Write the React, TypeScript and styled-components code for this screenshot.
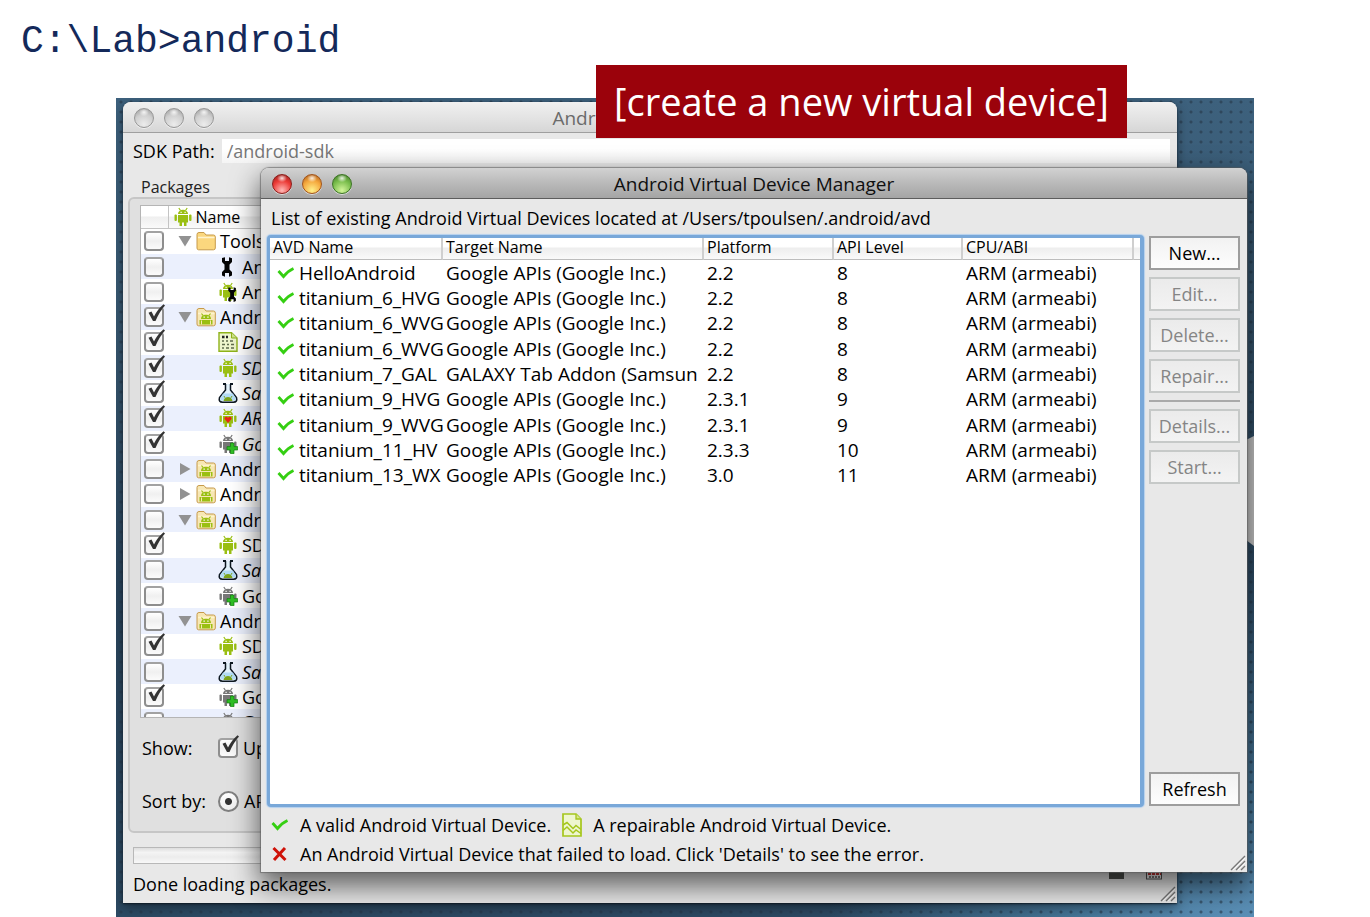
import React from "react";
import styled, { createGlobalStyle, css } from "styled-components";

const GlobalStyle = createGlobalStyle`
  *, *::before, *::after { box-sizing: border-box; }
  body { margin: 0; background: #fff; }
`;

const uiFont = `"Open Sans", "Noto Sans", sans-serif`;

const Page = styled.main`
  position: relative;
  display: flex;
  flex-direction: column;
  min-height: 100vh;
  overflow: hidden;
  font-family: ${uiFont};
  font-size: 18px;
  line-height: 24px;
  color: #000;
`;

const Command = styled.h1`
  margin: 0;
  height: 98px;
  padding: 20px 21px;
  font-family: "Liberation Mono", monospace;
  font-size: 38px;
  font-weight: 400;
  line-height: 44px;
  color: #14295a;
`;

const Banner = styled.div`
  position: absolute;
  top: 65px;
  left: 596px;
  right: 243px;
  z-index: 3;
  height: 73px;
  background: #9b020b;
  color: #fff;
  font-size: 38px;
  line-height: 73px;
  text-align: center;
  white-space: nowrap;
`;

const Desktop = styled.section`
  position: relative;
  flex: 1;
  min-height: 819px;
  margin: 0 116px;
  overflow: hidden;
  background:
    radial-gradient(circle at 5px 4px, rgba(38, 55, 72, 0.6) 1px, transparent 2px) 0 0 / 10px 10px,
    radial-gradient(circle at 100% 104%, #5f95bd 0, #477799 12%, transparent 30%),
    linear-gradient(180deg, #3d617d 0, #36566f 30%, #29445c 60%, #2c4a63 100%);
`;

const WallpaperShape = styled.svg`
  position: absolute;
  top: 338px;
  right: 0;
`;

const Window = styled.div<{ $front?: boolean }>`
  position: absolute;
  display: flex;
  flex-direction: column;
  border-radius: 8px 8px 0 0;
  background: #e8e8e8;
  overflow: hidden;
  ${(p) =>
    p.$front
      ? css`
          z-index: 2;
          top: 70px;
          left: 145px;
          right: 7px;
          min-height: 704px;
          box-shadow: 0 0 1px 1px rgba(90, 90, 90, 0.6), 0 12px 28px 2px rgba(0, 0, 0, 0.6);
        `
      : css`
          z-index: 1;
          top: 4px;
          left: 7px;
          right: 77px;
          min-height: 801px;
          box-shadow: 0 1px 2px rgba(10, 20, 30, 0.8), 0 4px 12px rgba(0, 0, 0, 0.4);
        `}
`;

const TitleBar = styled.header<{ $front?: boolean }>`
  display: grid;
  grid-template-columns: 1fr auto 1fr;
  align-items: center;
  height: 31px;
  padding: 0 11px;
  border-bottom: 1px solid ${(p) => (p.$front ? "#5c5c5c" : "#9f9f9f")};
  background: ${(p) =>
    p.$front
      ? "linear-gradient(#d2d2d2, #bcbcbc 45%, #a4a4a4)"
      : "linear-gradient(#f0f0f0, #e4e4e4 50%, #d6d6d6)"};
`;

const WindowTitle = styled.h2<{ $front?: boolean }>`
  margin: 0;
  font-size: 19px;
  font-weight: 400;
  line-height: 32px;
  color: ${(p) => (p.$front ? "#101010" : "#6b6b6b")};
  white-space: nowrap;
`;

const Lights = styled.div`
  display: flex;
  gap: 10px;
`;

const Light = styled.button<{ $edge: string; $mid: string; $glow: string }>`
  width: 20px;
  height: 20px;
  padding: 0;
  border: 1px solid ${(p) => p.$edge};
  border-radius: 50%;
  background:
    radial-gradient(ellipse 5px 4px at 50% 18%, rgba(255, 255, 255, 0.85), transparent),
    radial-gradient(circle at 50% 85%, ${(p) => p.$glow} 0, ${(p) => p.$mid} 55%, ${(p) => p.$edge} 100%);
  box-shadow: 0 1px 0 rgba(255, 255, 255, 0.6);
`;

const PathRow = styled.label`
  display: flex;
  align-items: center;
  gap: 7px;
  padding: 6px 7px 0 10px;
  white-space: nowrap;
`;

const PathInput = styled.input`
  flex: 1;
  min-width: 0;
  height: 24px;
  padding: 0 5px;
  border: 0;
  background: linear-gradient(#fff 40%, #f4f4f4);
  font: inherit;
  color: #777;
`;

const GroupLabel = styled.h3`
  margin: 14px 18px 0;
  font-size: 16px;
  font-weight: 400;
  line-height: 20px;
  color: #222;
`;

const Group = styled.div`
  display: flex;
  flex-direction: column;
  margin: 0 5px;
  padding: 6px 10px 18px;
  border: 2px solid #c6c6c6;
  border-radius: 6px;
  background: #e0e0e0;
`;

const TreeFrame = styled.div`
  height: 513px;
  overflow: hidden;
  border: 1px solid #b5b5b5;
  background: #fff;
`;

const Tree = styled.table`
  width: 100%;
  height: 529px;
  table-layout: fixed;
  border-collapse: collapse;
  td, th { padding: 0; }
  thead th {
    height: 22px;
    border-right: 1px solid #c4c4c4;
    border-bottom: 1px solid #c4c4c4;
    background: linear-gradient(#fff 45%, #efefef 50%, #fafafa);
    font-size: 16px;
    font-weight: 400;
    line-height: 20px;
    text-align: left;
  }
  tbody tr:nth-child(even) { background: #ebf0fd; }
`;

const TickCol = styled.col`
  width: 27px;
`;

const TreeCell = styled.div<{ $level?: number; $italic?: boolean }>`
  display: flex;
  align-items: center;
  gap: 4px;
  height: 24px;
  padding-left: ${(p) => (p.$level ? 50 : 10)}px;
  font-style: ${(p) => (p.$italic ? "italic" : "normal")};
  white-space: nowrap;
`;

const TreeHead = styled.div`
  display: flex;
  align-items: center;
  gap: 3px;
  padding-left: 4px;
`;

const Tick = styled.span`
  position: relative;
  display: block;
  flex: none;
  width: 20px;
  height: 20px;
  margin: 0 3px;
  svg {
    position: absolute;
    left: 2px;
    top: -3px;
    display: none;
    pointer-events: none;
  }
  input:checked + svg { display: block; }
`;

const TickBox = styled.input`
  appearance: none;
  display: block;
  width: 20px;
  height: 20px;
  margin: 0;
  border: 2px solid #8e8e8e;
  border-top-color: #a2a2a2;
  border-radius: 4px;
  background: linear-gradient(#fff, #f0f0f0 50%, #fbfbfb);
`;

const OptionRow = styled.div`
  display: flex;
  align-items: center;
  margin-top: 18px;
  & + & { margin-top: 29px; }
`;

const OptionName = styled.span`
  width: 75px;
  padding-left: 2px;
  white-space: nowrap;
`;

const OptionLabel = styled.label`
  display: flex;
  align-items: center;
  gap: 2px;
`;

const Radio = styled.input`
  appearance: none;
  flex: none;
  width: 21px;
  height: 21px;
  margin: 0 3px;
  border: 2px solid #808080;
  border-radius: 50%;
  background: radial-gradient(circle, #333 3px, transparent 4px), linear-gradient(#fff, #eee);
`;

const Progress = styled.div`
  height: 17px;
  margin: 14px 60px 0 10px;
  border: 1px solid #b8b8b8;
  background: linear-gradient(#dedede, #f4f4f4 30%, #ececec 60%, #f8f8f8);
`;

const Status = styled.footer`
  display: flex;
  padding: 8px 10px 5px;
`;

const StatusIcons = styled.svg`
  position: absolute;
  right: 13px;
  bottom: 23px;
`;

const Grip = styled.svg`
  position: absolute;
  right: 1px;
  bottom: 1px;
`;

const Intro = styled.p`
  margin: 0;
  padding: 7px 10px 5px;
  white-space: nowrap;
`;

const Body = styled.div`
  display: flex;
  flex: 1;
  gap: 5px;
  padding: 0 7px 0 6px;
`;

const ListFrame = styled.div`
  flex: 1;
  min-width: 0;
  border: 3px solid #79a8d9;
  border-right-width: 4px;
  border-radius: 4px;
  background: #fff;
  box-shadow: 0 0 1px 1px #b4d0ee;
`;

const Devices = styled.table`
  width: 100%;
  table-layout: fixed;
  border-spacing: 0;
  th {
    height: 22px;
    padding: 0 3px 2px;
    border-right: 2px solid #cfcfcf;
    border-bottom: 1px solid #bdbdbd;
    background: linear-gradient(#fff 40%, #eee 50%, #fafafa);
    font-size: 16px;
    font-weight: 400;
    line-height: 19px;
    text-align: left;
    white-space: nowrap;
  }
  th:last-child { border-right: 0; }
  td {
    padding: 0 0 0 3px;
    overflow: hidden;
    font-size: 19px;
    white-space: nowrap;
  }
`;

const DeviceRows = styled.tbody`
  height: 228px;
`;

const Col = styled.col<{ $w?: number }>`
  width: ${(p) => (p.$w ? `${p.$w}px` : "auto")};
`;

const NameCell = styled.span`
  display: flex;
  align-items: center;
  gap: 4px;
  padding-left: 4px;
  overflow: hidden;
  svg { flex: none; }
`;

const Actions = styled.div`
  display: flex;
  flex-direction: column;
  gap: 7px;
  width: 91px;
  padding: 1px 0;
`;

const Action = styled.button`
  height: 34px;
  padding: 0;
  border: 2px solid #9d9d9d;
  background: linear-gradient(#f2f2f2, #fdfdfd);
  font: inherit;
  font-size: 18px;
  color: #000;
  &:disabled {
    border-color: #c6c9c8;
    background: linear-gradient(#ebebeb, #f3f3f3);
    color: #858585;
  }
  &:last-child { margin-top: auto; }
`;

const Separator = styled.hr`
  width: 100%;
  height: 2px;
  margin: 0;
  border: 0;
  background: #a9a9a9;
`;

const Legend = styled.footer`
  display: flex;
  flex-direction: column;
  gap: 5px;
  padding: 6px 10px;
`;

const LegendRow = styled.div`
  display: flex;
  align-items: center;
  gap: 11px;
  white-space: nowrap;
`;

const CheckGreen = () => (
  <svg width="18" height="14" viewBox="0 0 18 14" aria-hidden="true">
    <path d="M1.500 5 6.500 10.500C9 7.500 12 4.500 16.500 2.500" fill="none" stroke="#35cf12" strokeWidth="2.800" />
  </svg>
);

const CrossRed = () => (
  <svg width="18" height="16" viewBox="0 0 18 16" aria-hidden="true">
    <path d="M2.500 2 14.500 14M14 2 3 14" fill="none" stroke="#cf1208" strokeWidth="3" />
  </svg>
);

const DocWave = () => (
  <svg width="20" height="24" viewBox="0 0 20 24" aria-hidden="true">
    <path d="M1 1h13l5 5v17H1z" fill="#eef6cf" stroke="#a5c61c" strokeWidth="1.700" />
    <path d="M14 1v5h5" fill="#d5e68c" stroke="#a5c61c" strokeWidth="1.300" />
    <path d="M1 12 5 9.500 11 15.500 14 12.500 19 16.500" fill="none" stroke="#a5c61c" strokeWidth="1.500" />
    <path d="M1 17.500 5 14 11 20 14 17 19 20.500" fill="none" stroke="#a5c61c" strokeWidth="1.500" />
  </svg>
);

const TickMark = () => (
  <svg width="20" height="20" viewBox="0 0 20 20" aria-hidden="true">
    <path d="M2.500 8.800 5.500 7.500 8 12.500C10.500 8 13.500 3.500 17.500.300L19 1.500C15 6 12 11 9.500 17H7Z" fill="#333" />
  </svg>
);

const RobotShape = ({ color = "#9abf12" }: { color?: string }) => (
  <g fill={color}>
    <path d="M5 7C5 4.500 7 2.800 10 2.800S15 4.500 15 7Z" />
    <path d="M7.500 3.500 5.800 1M12.500 3.500 14.200 1" stroke={color} strokeWidth="1.200" />
    <rect x="5" y="8" width="10" height="7.500" />
    <rect x="1.500" y="7.500" width="2.400" height="6.500" rx="1" />
    <rect x="16.100" y="7.500" width="2.400" height="6.500" rx="1" />
    <rect x="6.500" y="15" width="2.500" height="4" />
    <rect x="11" y="15" width="2.500" height="4" />
    <path d="M7.500 4.800h1.200v1.200H7.500zM11.500 4.800h1.200v1.200h-1.200z" fill="#fff" />
  </g>
);

const WrenchShape = ({ x = 0, y = 0, s = 1 }: { x?: number; y?: number; s?: number }) => (
  <path
    transform={`translate(${x} ${y}) scale(${s})`}
    d="M3 1 6 .2V4H10V.2L13 1.200V5L10.500 7.500V12.500L13 15V18.500L10 19.800V16H6V19.800L3 18.500V15L5.500 12.500V7.500L3 5Z"
    fill="#050505"
  />
);

type Kind = "folder" | "tools" | "platformTools" | "platform" | "doc" | "robot" | "flask" | "heart" | "addon";

const Glyph = ({ kind }: { kind: Kind }) => (
  <svg width="20" height="20" viewBox="0 0 20 20" aria-hidden="true">
    {(kind === "folder" || kind === "platform") && (
      <>
        <path
          d="M1 3.500Q1 1.500 3 1.500H8L10 4H17.500Q19.300 4 19.300 6V17Q19.300 18.800 17.500 18.800H2.500Q1 18.800 1 17Z"
          fill={kind === "folder" ? "#fbd77e" : "#f7e7b4"}
          stroke="#c79a4a"
        />
        <path d="M2 6.500H18.500" stroke="#fff3cd" strokeWidth="1.500" />
      </>
    )}
    {kind === "platform" && (
      <>
        <path d="M5 12C5 9 7 7.800 10 7.800S15 9 15 12Z" fill="#9abf12" />
        <path d="M7 8.500 5.500 6.500M13 8.500 14.500 6.500" stroke="#9abf12" strokeWidth="1.200" />
        <path d="M3.500 13H16.500V17.500H3.500Z" fill="#9abf12" />
        <path d="M7.500 9.600h1.300v1.200H7.500zM11.300 9.600h1.300v1.200h-1.300z" fill="#fff" />
        <path d="M5.500 13.500V17.500M14.500 13.500V17.500" stroke="#f7e7b4" />
      </>
    )}
    {kind === "tools" && <WrenchShape x={1} />}
    {kind === "robot" && <RobotShape />}
    {kind === "platformTools" && (
      <>
        <RobotShape />
        <WrenchShape x={8} y={5} s={0.76} />
      </>
    )}
    {kind === "heart" && (
      <>
        <RobotShape />
        <path d="M10 15 6.500 11C6 8.500 9 7.800 10 10 11 7.800 14 8.500 13.500 11Z" fill="#e8251a" />
      </>
    )}
    {kind === "addon" && (
      <>
        <RobotShape color="#777" />
        <path d="M12.500 9h3.500v3.600h3.700v3.400H16v3.700h-3.500V16H9v-3.400h3.500Z" fill="#2fbf24" stroke="#138010" strokeWidth="0.700" />
      </>
    )}
    {kind === "doc" && (
      <>
        <path d="M1 .8H13.500L19 6V19.300H1Z" fill="#edf5cd" stroke="#8fb31a" strokeWidth="1.400" />
        <path d="M13.500.8V6H19" fill="#cfe38a" stroke="#8fb31a" />
        <path d="M4 5h2.500M8 5h2" stroke="#222" strokeWidth="2.400" />
        <path d="M4 9h2M8 9h2M12 9h3M4 12.500h3M9 12.500h2M13 12.500h3M4 16h2M8 16h3M13 16h3" stroke="#5f6b4c" strokeWidth="1.400" />
      </>
    )}
    {kind === "flask" && (
      <>
        <path d="M7.500 1V7L1.500 14.500Q.3 19.200 4.500 19.200H15.500Q19.700 19.200 18.500 14.500L12.500 7V1" fill="#e4f3fc" stroke="#0d1720" strokeWidth="1.500" />
        <path d="M5 1H8M12 1H15" stroke="#0d1720" strokeWidth="1.800" />
        <path d="M5 10.500H15L17.500 15V17.500H2.500V15Z" fill="#b3dcf5" />
        <path d="M5.500 18C6 15.500 8 14 10 14S14 15.500 14.500 18Z" fill="#7ea51a" />
        <path d="M7 14.800 6 13M13 14.800 14 13" stroke="#7ea51a" />
      </>
    )}
  </svg>
);

const Arrow = ({ open }: { open: boolean }) => (
  <svg width="14" height="14" viewBox="0 0 14 14" aria-hidden="true">
    <path d={open ? "M0.500 2H13.500L7 12.500Z" : "M2 1V13L12.500 7Z"} fill="#929292" />
  </svg>
);

interface Item {
  name: string;
  kind: Kind;
  on?: boolean;
  leaf?: boolean;
  italic?: boolean;
  closed?: boolean;
}

const packages: Item[] = [
  { name: "Tools", kind: "folder" },
  { name: "And", kind: "tools", leaf: true },
  { name: "And", kind: "platformTools", leaf: true },
  { name: "Andro", kind: "platform", on: true },
  { name: "Doc", kind: "doc", on: true, leaf: true, italic: true },
  { name: "SDK", kind: "robot", on: true, leaf: true, italic: true },
  { name: "Sam", kind: "flask", on: true, leaf: true, italic: true },
  { name: "ARM", kind: "heart", on: true, leaf: true, italic: true },
  { name: "Goo", kind: "addon", on: true, leaf: true, italic: true },
  { name: "Andro", kind: "platform", closed: true },
  { name: "Andro", kind: "platform", closed: true },
  { name: "Andro", kind: "platform" },
  { name: "SDK", kind: "robot", on: true, leaf: true },
  { name: "Sam", kind: "flask", leaf: true, italic: true },
  { name: "Goo", kind: "addon", leaf: true },
  { name: "Andro", kind: "platform" },
  { name: "SDK", kind: "robot", on: true, leaf: true },
  { name: "Sam", kind: "flask", leaf: true, italic: true },
  { name: "Goo", kind: "addon", on: true, leaf: true },
  { name: "Goo", kind: "addon", leaf: true },
];

const google = "Google APIs (Google Inc.)";
const devices = [
  ["HelloAndroid", google, "2.2", "8"],
  ["titanium_6_HVG", google, "2.2", "8"],
  ["titanium_6_WVG", google, "2.2", "8"],
  ["titanium_6_WVG", google, "2.2", "8"],
  ["titanium_7_GAL", "GALAXY Tab Addon (Samsun", "2.2", "8"],
  ["titanium_9_HVG", google, "2.3.1", "9"],
  ["titanium_9_WVG", google, "2.3.1", "9"],
  ["titanium_11_HV", google, "2.3.3", "10"],
  ["titanium_13_WX", google, "3.0", "11"],
];

const lightColours = {
  grey: ["#979797", "#cfcfcf", "#ececec"],
  red: ["#8c1d1a", "#ec3a36", "#ffb9b6"],
  amber: ["#a3541a", "#f5a73c", "#fff08a"],
  green: ["#3c7424", "#79bd4c", "#d3f59a"],
};

const TrafficLights = ({ colours }: { colours: (keyof typeof lightColours)[] }) => (
  <Lights>
    {["Close", "Minimise", "Zoom"].map((label, i) => {
      const [edge, mid, glow] = lightColours[colours[i]];
      return <Light key={label} type="button" aria-label={label} $edge={edge} $mid={mid} $glow={glow} />;
    })}
  </Lights>
);

const ResizeGrip = () => (
  <Grip width="16" height="16" viewBox="0 0 16 16" aria-hidden="true">
    <path d="M1 15 15 1M6 15 15 6M11 15 15 11" stroke="#777" strokeWidth="1.400" />
    <path d="M3 15 15 3M8 15 15 8" stroke="#fff" strokeWidth="0.800" />
  </Grip>
);

const TickInput = ({ on, label }: { on?: boolean; label?: string }) => (
  <Tick>
    <TickBox type="checkbox" defaultChecked={on} aria-label={label} />
    <TickMark />
  </Tick>
);

const SdkManager = () => (
  <Window>
    <TitleBar>
      <TrafficLights colours={["grey", "grey", "grey"]} />
      <WindowTitle>Android SDK Manager</WindowTitle>
    </TitleBar>
    <PathRow>
      SDK Path:
      <PathInput defaultValue="/android-sdk" />
    </PathRow>
    <GroupLabel>Packages</GroupLabel>
    <Group>
      <TreeFrame>
        <Tree>
          <colgroup>
            <TickCol />
            <col />
          </colgroup>
          <thead>
            <tr>
              <th />
              <th>
                <TreeHead>
                  <Glyph kind="robot" />
                  Name
                </TreeHead>
              </th>
            </tr>
          </thead>
          <tbody>
            {packages.map((p, i) => (
              <tr key={i}>
                <td>
                  <TickInput on={p.on} label={p.name} />
                </td>
                <td>
                  <TreeCell $level={p.leaf ? 1 : 0} $italic={p.italic}>
                    {!p.leaf && <Arrow open={!p.closed} />}
                    <Glyph kind={p.kind} />
                    {p.name}
                  </TreeCell>
                </td>
              </tr>
            ))}
          </tbody>
        </Tree>
      </TreeFrame>
      <OptionRow>
        <OptionName>Show:</OptionName>
        <OptionLabel>
          <TickInput on />
          Upd
        </OptionLabel>
      </OptionRow>
      <OptionRow>
        <OptionName>Sort by:</OptionName>
        <OptionLabel>
          <Radio type="radio" name="sort" defaultChecked />
          API
        </OptionLabel>
      </OptionRow>
    </Group>
    <Progress />
    <Status>Done loading packages.</Status>
    <StatusIcons width="56" height="12" viewBox="0 0 56 12" aria-hidden="true">
      <rect x="1" y="0" width="15" height="11" fill="#4f514d" />
      <rect x="38.500" y="0" width="15" height="11" fill="#eee" stroke="#555" />
      <path d="M40 6h13" stroke="#c33" strokeWidth="2" strokeDasharray="3 1" />
      <path d="M41 9h11" stroke="#555" strokeWidth="1.500" strokeDasharray="2 1" />
    </StatusIcons>
    <ResizeGrip />
  </Window>
);

const DeviceManager = () => (
  <Window $front>
    <TitleBar $front>
      <TrafficLights colours={["red", "amber", "green"]} />
      <WindowTitle $front>Android Virtual Device Manager</WindowTitle>
    </TitleBar>
    <Intro>List of existing Android Virtual Devices located at /Users/tpoulsen/.android/avd</Intro>
    <Body>
      <ListFrame>
        <Devices>
          <colgroup>
            <Col $w={173} />
            <Col $w={261} />
            <Col $w={130} />
            <Col $w={129} />
            <Col />
            <Col $w={6} />
          </colgroup>
          <thead>
            <tr>
              {["AVD Name", "Target Name", "Platform", "API Level", "CPU/ABI"].map((h) => (
                <th key={h}>{h}</th>
              ))}
              <th />
            </tr>
          </thead>
          <DeviceRows>
            {devices.map(([name, target, platform, api], i) => (
              <tr key={i}>
                <td>
                  <NameCell>
                    <CheckGreen />
                    {name}
                  </NameCell>
                </td>
                <td>{target}</td>
                <td>{platform}</td>
                <td>{api}</td>
                <td>ARM (armeabi)</td>
                <td />
              </tr>
            ))}
          </DeviceRows>
        </Devices>
      </ListFrame>
      <Actions>
        <Action type="button">New...</Action>
        <Action type="button" disabled>Edit...</Action>
        <Action type="button" disabled>Delete...</Action>
        <Action type="button" disabled>Repair...</Action>
        <Separator />
        <Action type="button" disabled>Details...</Action>
        <Action type="button" disabled>Start...</Action>
        <Action type="button">Refresh</Action>
      </Actions>
    </Body>
    <Legend>
      <LegendRow>
        <CheckGreen />
        <span>A valid Android Virtual Device.</span>
        <DocWave />
        <span>A repairable Android Virtual Device.</span>
      </LegendRow>
      <LegendRow>
        <CrossRed />
        <span>An Android Virtual Device that failed to load. Click 'Details' to see the error.</span>
      </LegendRow>
    </Legend>
    <ResizeGrip />
  </Window>
);

export default function App() {
  return (
    <>
      <GlobalStyle />
      <Page>
        <Command>C:\Lab&gt;android</Command>
        <Banner>[create a new virtual device]</Banner>
        <Desktop>
          <WallpaperShape width="8" height="110" viewBox="0 0 8 110" aria-hidden="true">
            <path d="M0 4 8 0V110L0 104Z" fill="#c9c9c9" />
          </WallpaperShape>
          <SdkManager />
          <DeviceManager />
        </Desktop>
      </Page>
    </>
  );
}
